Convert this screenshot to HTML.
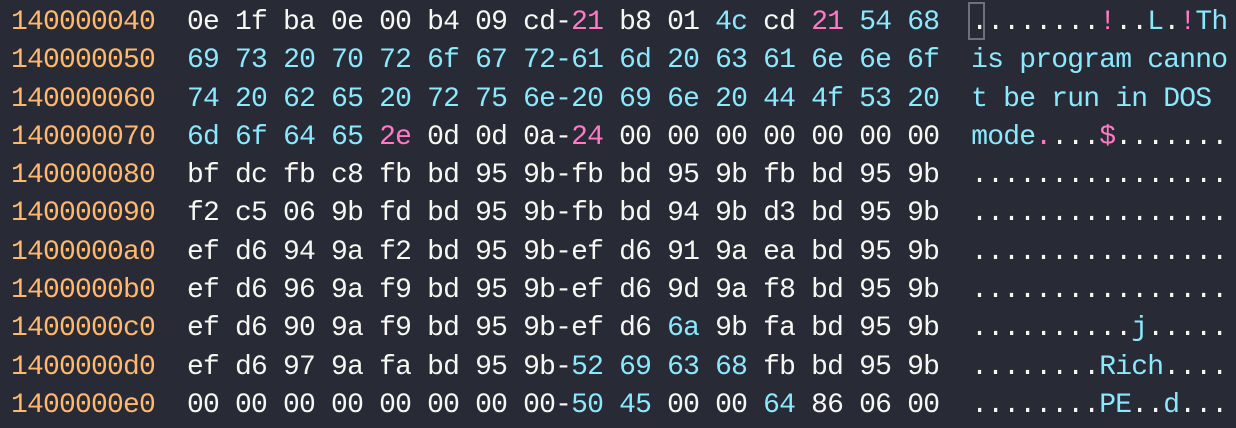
<!DOCTYPE html>
<html><head><meta charset="utf-8"><style>
html,body{margin:0;padding:0;background:#282a36;width:1236px;height:428px;overflow:hidden}
.w{position:absolute;left:11px;top:4px;font-family:"Liberation Mono",monospace;font-size:28px;letter-spacing:-0.8px;line-height:38.3px;color:#f8f8f2}
.w div{white-space:pre;height:38.3px}
.a{color:#ffb86c}.c{color:#8be9fd}.p{color:#ff79c6}
.cur{position:absolute;left:968px;top:2px;width:17px;height:38px;border:2px solid #6e707c;box-sizing:border-box}
</style></head><body>
<div class="cur"></div>
<div class="w"><div><span class="a">140000040</span>  0e 1f ba 0e 00 b4 09 cd-<span class="p">21</span> b8 01 <span class="c">4c</span> cd <span class="p">21</span> <span class="c">54 68</span>  ........<span class="p">!</span>..<span class="c">L</span>.<span class="p">!</span><span class="c">Th</span></div><div><span class="a">140000050</span>  <span class="c">69 73 20 70 72 6f 67 72-61 6d 20 63 61 6e 6e 6f  is program canno</span></div><div><span class="a">140000060</span>  <span class="c">74 20 62 65 20 72 75 6e-20 69 6e 20 44 4f 53 20  t be run in DOS </span></div><div><span class="a">140000070</span>  <span class="c">6d 6f 64 65</span> <span class="p">2e</span> 0d 0d 0a-<span class="p">24</span> 00 00 00 00 00 00 00  <span class="c">mode</span><span class="p">.</span>...<span class="p">$</span>.......</div><div><span class="a">140000080</span>  bf dc fb c8 fb bd 95 9b-fb bd 95 9b fb bd 95 9b  ................</div><div><span class="a">140000090</span>  f2 c5 06 9b fd bd 95 9b-fb bd 94 9b d3 bd 95 9b  ................</div><div><span class="a">1400000a0</span>  ef d6 94 9a f2 bd 95 9b-ef d6 91 9a ea bd 95 9b  ................</div><div><span class="a">1400000b0</span>  ef d6 96 9a f9 bd 95 9b-ef d6 9d 9a f8 bd 95 9b  ................</div><div><span class="a">1400000c0</span>  ef d6 90 9a f9 bd 95 9b-ef d6 <span class="c">6a</span> 9b fa bd 95 9b  ..........<span class="c">j</span>.....</div><div><span class="a">1400000d0</span>  ef d6 97 9a fa bd 95 9b-<span class="c">52 69 63 68</span> fb bd 95 9b  ........<span class="c">Rich</span>....</div><div><span class="a">1400000e0</span>  00 00 00 00 00 00 00 00-<span class="c">50 45</span> 00 00 <span class="c">64</span> 86 06 00  ........<span class="c">PE</span>..<span class="c">d</span>...</div></div>
</body></html>
